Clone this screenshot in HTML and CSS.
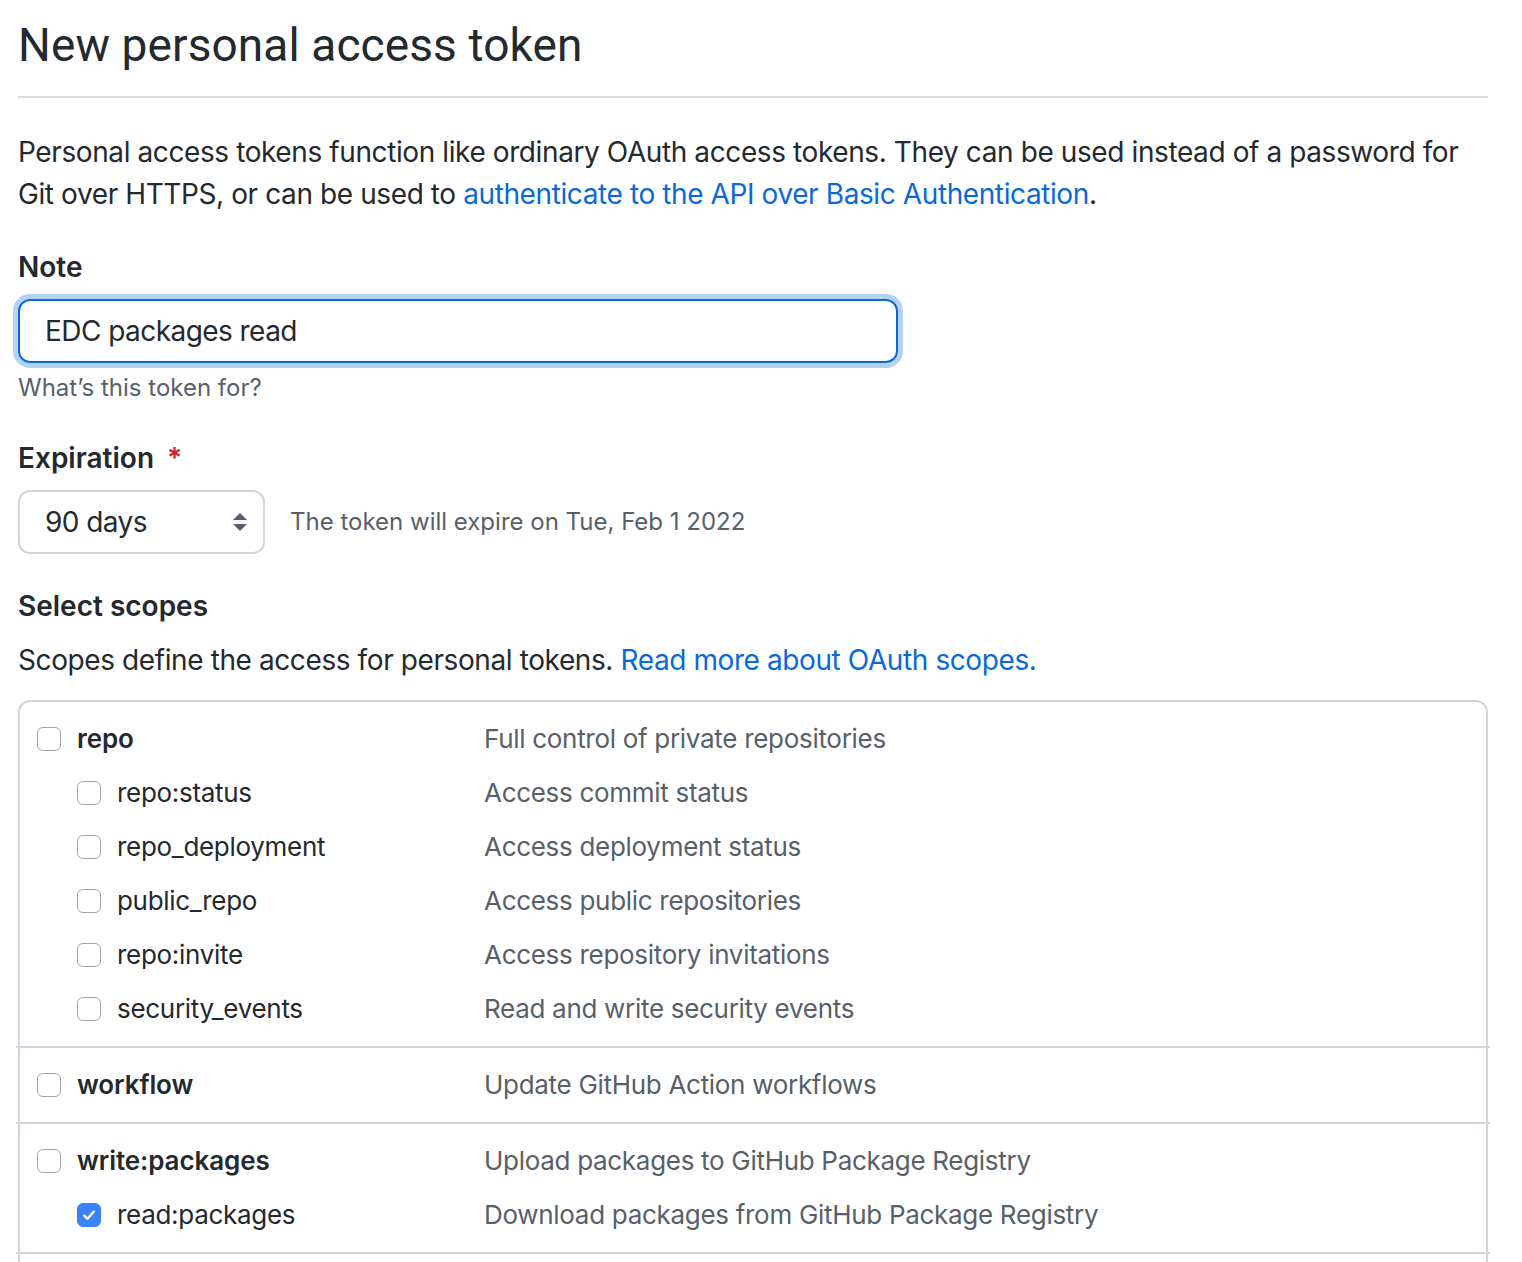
FILE: index.html
```html
<!DOCTYPE html>
<html lang="en">
<head>
<meta charset="utf-8">
<title>New personal access token</title>
<link rel="stylesheet" href="styles.css">
</head>
<body>
<main class="page">
  <h1 class="subhead">New personal access token</h1>
  <p class="lead">Personal access tokens function like ordinary OAuth access tokens. They can be used instead of a password for Git over HTTPS, or can be used to <a href="#">authenticate to the API over Basic Authentication</a>.</p>

  <div class="form-group">
    <label class="label">Note</label>
    <div class="input focused">EDC packages read</div>
    <p class="note">What’s this token for?</p>
  </div>

  <div class="form-group exp">
    <label class="label">Expiration <span class="req">*</span></label>
    <div class="exp-row">
      <div class="select">
        <span>90 days</span>
        <svg class="arrows" width="16" height="22" viewBox="0 0 16 22"><path d="M8 2 L15 9 L1 9 Z" fill="#57606a"/><path d="M1 13 L15 13 L8 20 Z" fill="#57606a"/></svg>
      </div>
      <span class="exp-note">The token will expire on Tue, Feb 1 2022</span>
    </div>
  </div>

  <div class="form-group">
    <label class="label">Select scopes</label>
    <p class="scopes-desc">Scopes define the access for personal tokens. <a href="#">Read more about OAuth scopes.</a></p>
  </div>

  <div class="scopes">
    <div class="group first">
      <div class="row top"><span class="cb"></span><span class="name">repo</span><span class="desc">Full control of private repositories</span></div>
      <div class="row sub"><span class="cb"></span><span class="name">repo:status</span><span class="desc">Access commit status</span></div>
      <div class="row sub"><span class="cb"></span><span class="name">repo_deployment</span><span class="desc">Access deployment status</span></div>
      <div class="row sub"><span class="cb"></span><span class="name">public_repo</span><span class="desc">Access public repositories</span></div>
      <div class="row sub"><span class="cb"></span><span class="name">repo:invite</span><span class="desc">Access repository invitations</span></div>
      <div class="row sub"><span class="cb"></span><span class="name">security_events</span><span class="desc">Read and write security events</span></div>
    </div>
    <div class="group">
      <div class="row top"><span class="cb"></span><span class="name">workflow</span><span class="desc">Update GitHub Action workflows</span></div>
    </div>
    <div class="group">
      <div class="row top"><span class="cb"></span><span class="name">write:packages</span><span class="desc">Upload packages to GitHub Package Registry</span></div>
      <div class="row sub"><span class="cb checked"><svg width="16" height="16" viewBox="0 0 16 16"><path d="M3.2 8.6 L6.6 11.8 L12.8 4.6" fill="none" stroke="#fff" stroke-width="2.4" stroke-linecap="round" stroke-linejoin="round"/></svg></span><span class="name">read:packages</span><span class="desc">Download packages from GitHub Package Registry</span></div>
    </div>
    <div class="group rest"></div>
  </div>
</main>
</body>
</html>
```

FILE: styles.css
```css
html, body {
  margin: 0;
  padding: 0;
  background: #ffffff;
}
body {
  font-family: Inter, Roboto, "Liberation Sans", Arial, sans-serif;
  color: #24292f;
  font-size: 28px;
  line-height: 42px;
  letter-spacing: -0.4px;
}
a {
  color: #0969da;
  text-decoration: none;
}
.page {
  width: 1470px;
  margin-left: 18px;
}
.subhead {
  margin: 10px 0 0;
  font-family: Roboto, Inter, "Liberation Sans", Arial, sans-serif;
  font-size: 46px;
  font-weight: 400;
  line-height: 70px;
  letter-spacing: 0.1px;
  padding-bottom: 16px;
  border-bottom: 2px solid #d8dee4;
}
.lead {
  margin: 33px 0 0;
}
.form-group {
  margin-top: 31px;
}
.label {
  display: block;
  font-weight: 600;
  line-height: 42px;
  letter-spacing: 0;
  margin-bottom: 11px;
}
.req {
  color: #cf222e;
  margin-left: 6px;
}
.input {
  box-sizing: border-box;
  width: 880px;
  height: 64px;
  border: 2px solid #d0d7de;
  border-radius: 12px;
  padding: 0 25px;
  display: flex;
  align-items: center;
  letter-spacing: -0.55px;
}
.input.focused {
  border-color: #0969da;
  box-shadow: 0 0 0 5px rgba(9, 105, 218, 0.3);
}
.note {
  margin: 7px 0 0;
  font-size: 24px;
  line-height: 36px;
  letter-spacing: 0;
  color: #57606a;
}
.exp-row {
  display: flex;
  align-items: center;
  gap: 25px;
}
.select {
  box-sizing: border-box;
  width: 247px;
  height: 64px;
  border: 2px solid #d0d7de;
  border-radius: 12px;
  padding: 0 15px 0 25px;
  display: flex;
  align-items: center;
  justify-content: space-between;
  letter-spacing: -0.55px;
}
.exp-note {
  font-size: 24px;
  letter-spacing: 0;
  color: #57606a;
}
.scopes-desc {
  margin: 12px 0 0;
}
.scopes {
  margin-top: 19px;
  border: 2px solid #d0d7de;
  border-bottom: none;
  border-radius: 12px 12px 0 0;
  font-size: 26px;
  letter-spacing: -0.3px;
}
.group {
  padding: 10px 21px 10px;
  margin: 0 -4px;
  border-top: 2px solid #d0d7de;
}
.group.first {
  border-top: none;
  margin: 0;
  padding-left: 17px;
  padding-right: 17px;
}
.group.rest {
  height: 60px;
  padding: 0;
}
.row {
  display: flex;
  align-items: center;
  height: 54px;
}
.row.sub {
  padding-left: 40px;
}
.cb {
  box-sizing: border-box;
  width: 24px;
  height: 24px;
  border: 1.5px solid #a4a4a4;
  border-radius: 6px;
  background: #fff;
  flex: none;
  display: flex;
  align-items: center;
  justify-content: center;
}
.cb.checked {
  background: #3a82f7;
  border-color: #3a82f7;
}
.name {
  margin-left: 16px;
  width: 407px;
  flex: none;
}
.row.sub .name {
  width: 367px;
}
.row.top .name {
  font-weight: 600;
  letter-spacing: -0.1px;
}
.desc {
  color: #57606a;
}
```
